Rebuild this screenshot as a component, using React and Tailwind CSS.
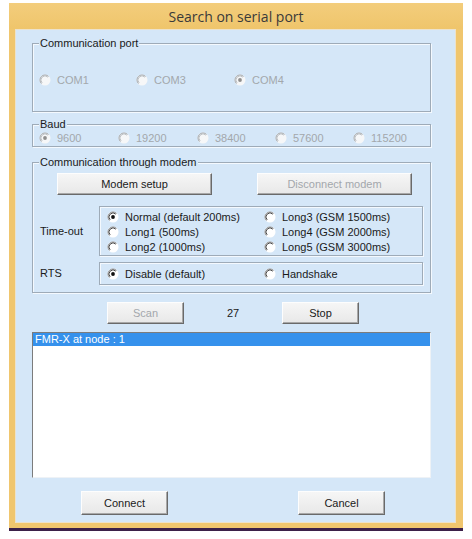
import React from 'react';

const font = { fontFamily: '"Liberation Sans", Arial, sans-serif' };

function Radio({ checked, disabled }) {
  return (
    <svg width="12" height="12" viewBox="0 0 12 12" className="shrink-0">
      <circle cx="6" cy="6" r="5.5" fill={disabled ? '#f6f7f8' : '#ffffff'} />
      <path d="M2.46 9.54 A5 5 0 0 1 9.54 2.46" stroke={disabled ? '#a3a7ab' : '#8c8c8c'} fill="none" />
      <path d="M3.17 8.83 A4 4 0 0 1 8.83 3.17" stroke={disabled ? '#bfc3c7' : '#4a4a4a'} fill="none" />
      {checked && <circle cx="6" cy="6" r="1.9" fill={disabled ? '#8f8f8f' : '#111111'} />}
    </svg>
  );
}

function Option({ label, checked, disabled, className = '' }) {
  return (
    <div className={`flex items-center gap-[6px] h-[14px] leading-[14px] ${className}`}>
      <Radio checked={checked} disabled={disabled} />
      <span className={disabled ? 'text-[#a3a7ac]' : 'text-[#1a1a1a]'}>{label}</span>
    </div>
  );
}

function Group({ label, className = '', children }) {
  return (
    <div className={`flex flex-col border border-[#9eabb8] shadow-[inset_1px_1px_0_#f4f9fe,1px_1px_0_#f4f9fe] ${className}`}>
      <div className="-mt-[7px] ml-[6px] self-start px-[1px] bg-[#d5e7f8] leading-[13px] text-[#1a1a1a]">
        {label}
      </div>
      {children}
    </div>
  );
}

function Button({ children, disabled, className = '' }) {
  return (
    <div
      className={`flex items-center justify-center bg-gradient-to-b from-[#f6f6f6] to-[#e8e8e8] border border-t-[#fdfdfd] border-l-[#fdfdfd] border-r-[#6a6a6a] border-b-[#6a6a6a] shadow-[inset_-1px_-1px_0_#a8a8a8] ${disabled ? 'text-[#a3a7ac]' : 'text-[#1a1a1a]'} ${className}`}
    >
      {children}
    </div>
  );
}

export default function App() {
  return (
    <div className="w-[472px] h-[539px] bg-white overflow-hidden text-[11px]" style={font}>
      <div className="ml-[9px] mt-[3px] w-[454px] bg-[#f0c66e] border-b-[3px] border-[#3b2049] pb-[5px]">
        {/* Title bar */}
        <div
          className="h-[26px] flex items-center justify-center text-[14px] text-[#3a3a3a] bg-gradient-to-b from-[#f3cd7c] to-[#efc56b]"
          style={{ fontFamily: '"Open Sans", "Noto Sans", sans-serif' }}
        >
          Search on serial port
        </div>

        {/* Client area */}
        <div className="ml-[6px] w-[441px] h-[494px] bg-[#d5e7f8] border border-[#ece2cc] flex flex-col">
          {/* Communication port */}
          <Group label="Communication port" className="ml-[16px] w-[399px] h-[69px] mt-[13px]">
            <div className="flex mt-[23px] pl-[6px]">
              <Option label="COM1" disabled className="w-[97px]" />
              <Option label="COM3" disabled className="w-[98px]" />
              <Option label="COM4" checked disabled />
            </div>
          </Group>

          {/* Baud */}
          <Group label="Baud" className="ml-[16px] w-[399px] h-[23px] mt-[12px]">
            <div className="flex pl-[6px]">
              <Option label="9600" checked disabled className="w-[79px]" />
              <Option label="19200" disabled className="w-[79px]" />
              <Option label="38400" disabled className="w-[78px]" />
              <Option label="57600" disabled className="w-[78px]" />
              <Option label="115200" disabled />
            </div>
          </Group>

          {/* Communication through modem */}
          <Group label="Communication through modem" className="ml-[16px] w-[399px] h-[131px] mt-[15px]">
            <div className="flex mt-[4px] ml-[24px] gap-[45px]">
              <Button className="w-[155px] h-[22px]">Modem setup</Button>
              <Button disabled className="w-[155px] h-[22px]">Disconnect modem</Button>
            </div>

            <div className="flex items-center mt-[11px] pl-[7px]">
              <div className="w-[59px] text-[#1a1a1a]">Time-out</div>
              <div className="w-[324px] h-[50px] border border-[#9eabb8] shadow-[inset_1px_1px_0_#f4f9fe,1px_1px_0_#f4f9fe] grid grid-cols-[157px_1fr] pt-[3px] pl-[7px]">
                <Option label="Normal (default 200ms)" checked />
                <Option label="Long3 (GSM 1500ms)" />
                <Option label="Long1 (500ms)" />
                <Option label="Long4 (GSM 2000ms)" />
                <Option label="Long2 (1000ms)" />
                <Option label="Long5 (GSM 3000ms)" />
              </div>
            </div>

            <div className="flex items-center mt-[6px] pl-[7px]">
              <div className="w-[59px] text-[#1a1a1a]">RTS</div>
              <div className="w-[324px] h-[23px] border border-[#9eabb8] shadow-[inset_1px_1px_0_#f4f9fe,1px_1px_0_#f4f9fe] grid grid-cols-[157px_1fr] items-center pl-[7px]">
                <Option label="Disable (default)" checked />
                <Option label="Handshake" />
              </div>
            </div>
          </Group>

          {/* Scan row */}
          <div className="flex items-center mt-[9px] ml-[91px] h-[22px]">
            <Button disabled className="w-[77px] h-[22px]">Scan</Button>
            <div className="w-[98px] text-center text-[#1a1a1a]">27</div>
            <Button className="w-[77px] h-[22px]">Stop</Button>
          </div>

          {/* Result list */}
          <div className="ml-[16px] mt-[8px] w-[399px] h-[146px] bg-white border border-t-[#7c7c7c] border-l-[#7c7c7c] border-r-[#eef2f6] border-b-[#eef2f6]">
            <div className="h-[13px] leading-[13px] bg-[#3591ec] text-white pl-[2px]">FMR-X at node : 1</div>
          </div>

          {/* Bottom buttons */}
          <div className="flex mt-[13px] ml-[65px] gap-[130px]">
            <Button className="w-[87px] h-[24px]">Connect</Button>
            <Button className="w-[87px] h-[24px]">Cancel</Button>
          </div>
        </div>
      </div>
    </div>
  );
}
